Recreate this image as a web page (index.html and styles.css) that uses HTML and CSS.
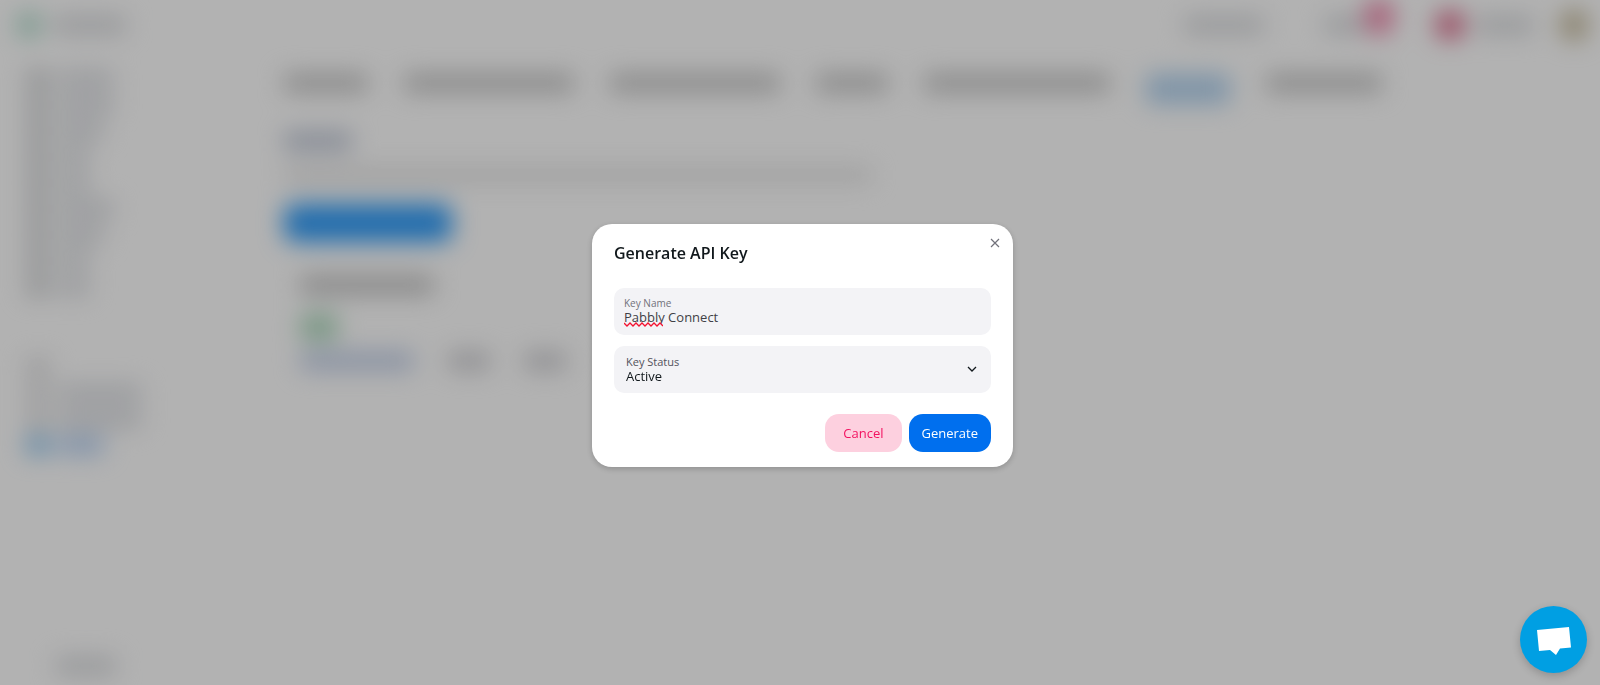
FILE: index.html
```html
<!DOCTYPE html>
<html lang="en">

<head>
    <meta charset="UTF-8">
    <meta name="viewport" content="width=device-width, initial-scale=1.0">
    <title>Generate API Key</title>
    <link rel="stylesheet" href="styles.css">
</head>

<body>

    <!-- Page behind the dialog -->
    <div class="app" aria-hidden="true">
        <header class="topbar">
            <span class="logo"></span>
            <span class="bar brand"></span>
            <div class="topbar-right">
                <span class="bar plan"></span>
                <span class="bar help"></span>
                <span class="badge"></span>
                <span class="dot"></span>
                <span class="bar user"></span>
                <span class="avatar"></span>
            </div>
        </header>

        <div class="columns">
            <nav class="sidebar">
                <div class="nav-row"><i></i><span class="bar long"></span></div>
                <div class="nav-row"><i></i><span class="bar long"></span></div>
                <div class="nav-row"><i></i><span class="bar mid"></span></div>
                <div class="nav-row"><i></i><span class="bar short"></span></div>
                <div class="nav-row"><i></i><span class="bar short"></span></div>
                <div class="nav-row"><i></i><span class="bar long"></span></div>
                <div class="nav-row"><i></i><span class="bar mid"></span></div>
                <div class="nav-row"><i></i><span class="bar short"></span></div>
                <div class="nav-row"><i></i><span class="bar short"></span></div>
                <div class="nav-group">
                    <div class="nav-row heading"><i></i></div>
                    <div class="nav-row"><i></i><span class="bar wide"></span></div>
                    <div class="nav-row"><i></i><span class="bar wide"></span></div>
                    <div class="nav-row current"><i></i><span class="bar mid"></span></div>
                </div>
                <span class="bar version"></span>
            </nav>

            <main class="content">
                <div class="tabs">
                    <span class="bar tab tab-s"></span>
                    <span class="bar tab tab-l"></span>
                    <span class="bar tab tab-l"></span>
                    <span class="bar tab tab-xs"></span>
                    <span class="bar tab tab-xl"></span>
                    <span class="bar tab tab-s active"></span>
                    <span class="bar tab tab-m"></span>
                </div>
                <div class="bar subtitle"></div>
                <div class="bar intro"></div>
                <div class="new-key"></div>
                <div class="key-card">
                    <div class="bar key-title"></div>
                    <div class="key-state"></div>
                    <div class="key-actions">
                        <span class="bar key-link"></span>
                        <span class="bar key-action"></span>
                        <span class="bar key-action"></span>
                    </div>
                </div>
            </main>
        </div>
    </div>

    <div class="overlay">
        <form class="modal" role="dialog" aria-modal="true" aria-labelledby="modalTitle">
            <button type="button" class="close" aria-label="Close">
                <svg width="10" height="10" viewBox="0 0 10 10">
                    <path d="M1 1l8 8M9 1l-8 8" fill="none" stroke="currentColor" stroke-width="1.2" />
                </svg>
            </button>
            <h1 id="modalTitle">Generate API Key</h1>

            <div class="field">
                <label for="keyName">Key Name</label>
                <input type="text" id="keyName" value="Pabbly Connect">
                <svg class="squiggle" width="39" height="5" viewBox="0 0 39 5">
                    <path d="M0 1l3 3 3-3 3 3 3-3 3 3 3-3 3 3 3-3 3 3 3-3 3 3 3-3 3 3" fill="none" stroke="#f31230"
                        stroke-width="1.3" />
                </svg>
            </div>

            <div class="field field-select">
                <label for="keyStatus">Key Status</label>
                <select id="keyStatus">
                    <option selected>Active</option>
                    <option>Inactive</option>
                </select>
                <svg class="chevron" width="10" height="6" viewBox="0 0 10 6">
                    <path d="M1 1l4 4 4-4" fill="none" stroke="currentColor" stroke-width="1.3" />
                </svg>
            </div>

            <div class="actions">
                <button type="button" class="btn cancel">Cancel</button>
                <button type="submit" class="btn generate">Generate</button>
            </div>
        </form>
    </div>

    <button type="button" class="chat" aria-label="Open chat">
        <svg width="67" height="67" viewBox="0 0 67 67">
            <path d="M17 24L49 21L51 41.500L40 42.500L36 49L30 44L19 45Z" fill="#fff" />
        </svg>
    </button>

</body>

</html>
```
FILE: styles.css
```css
* {
    box-sizing: border-box;
}

body {
    margin: 0;
    font-family: "Open Sans", "Noto Sans", sans-serif;
    background-color: #fff;
    color: #11181c;
}

button,
input,
select {
    font-family: inherit;
    border: none;
    padding: 0;
    margin: 0;
}

/* page behind the dialog */
.app {
    height: 100vh;
    display: flex;
    flex-direction: column;
    filter: blur(12px);
}

.bar {
    display: block;
    height: 18px;
    border-radius: 4px;
    background-color: #d8dadd;
}

.topbar {
    display: flex;
    align-items: center;
    height: 50px;
    padding: 0 12px 0 16px;
}

.logo {
    width: 26px;
    height: 26px;
    margin-right: 12px;
    border-radius: 50%;
    background-color: #b0dccc;
}

.brand {
    width: 72px;
}

.topbar-right {
    display: flex;
    align-items: center;
    margin-left: auto;
}

.plan {
    width: 80px;
    margin-right: 60px;
}

.help {
    width: 40px;
}

.badge {
    width: 30px;
    height: 36px;
    margin-right: 42px;
    align-self: flex-start;
    border-radius: 50%;
    background-color: #f088ac;
}

.topbar-right .badge {
    margin-top: -10px;
}

.dot {
    width: 28px;
    height: 28px;
    margin-right: 12px;
    border-radius: 50%;
    background-color: #d85c80;
}

.user {
    width: 58px;
    margin-right: 26px;
}

.avatar {
    width: 28px;
    height: 32px;
    border-radius: 50%;
    background-color: #c4b898;
}

.columns {
    display: flex;
    flex: 1;
}

.sidebar {
    display: flex;
    flex-direction: column;
    gap: 8px;
    width: 284px;
    padding: 20px 26px 10px;
}

.nav-row {
    display: flex;
    align-items: center;
    gap: 8px;
}

.nav-row i {
    width: 24px;
    height: 18px;
    border-radius: 4px;
    background-color: #ccced0;
}

.nav-row .bar {
    background-color: #dcdee2;
}

.long {
    width: 56px;
}

.mid {
    width: 46px;
}

.short {
    width: 32px;
}

.wide {
    width: 84px;
}

.nav-group {
    display: flex;
    flex-direction: column;
    gap: 8px;
    margin-top: 54px;
}

.nav-group i {
    background-color: #dcdcde;
}

.nav-group .current i {
    background-color: #84c0ee;
}

.nav-group .current .bar {
    background-color: #b4d0f4;
}

.version {
    width: 60px;
    margin: auto 0 0 30px;
}

.content {
    flex: 1;
    padding: 24px 0 0;
}

.tabs {
    display: flex;
    gap: 36px;
}

.tab {
    background-color: #c4c4c4;
}

.tab-xs {
    width: 72px;
}

.tab-s {
    width: 84px;
}

.tab-m {
    width: 116px;
}

.tab-l {
    width: 170px;
}

.tab-xl {
    width: 186px;
}

.active {
    height: 30px;
    background-color: #b4d4f0;
}

.subtitle {
    width: 68px;
    margin-top: 28px;
    background-color: #bcc4d4;
}

.intro {
    width: 588px;
    height: 14px;
    margin-top: 18px;
    background-color: #e2e2e2;
}

.new-key {
    width: 168px;
    height: 38px;
    margin-top: 22px;
    border-radius: 10px;
    background-color: #309cf8;
}

.key-card {
    padding: 34px 16px;
}

.key-title {
    width: 134px;
    background-color: #c0c0c0;
}

.key-state {
    width: 38px;
    height: 26px;
    margin-top: 20px;
    border-radius: 8px;
    background-color: #acd8bc;
}

.key-actions {
    display: flex;
    gap: 34px;
    margin-top: 12px;
}

.key-link {
    width: 114px;
    background-color: #c0cee8;
}

.key-action {
    width: 42px;
    background-color: #ccccd0;
}

/* dialog */
.overlay {
    position: fixed;
    inset: 0;
    display: flex;
    align-items: center;
    justify-content: center;
    padding: 6px 0 0 5px;
    background-color: rgba(0, 0, 0, 0.3);
}

.modal {
    position: relative;
    width: 421px;
    max-width: 100%;
    padding: 16px 22px 15px;
    border-radius: 20px;
    background-color: #fff;
    box-shadow: 0 2px 6px rgba(0, 0, 0, 0.2);
}

.modal h1 {
    margin: 0 0 22px;
    font-size: 16px;
    font-weight: 600;
    line-height: 26px;
}

.close {
    position: absolute;
    top: 14px;
    right: 13px;
    display: flex;
    padding: 0;
    background: none;
    color: #71717a;
    cursor: pointer;
}

.field {
    position: relative;
    display: flex;
    flex-direction: column;
    height: 47px;
    margin-bottom: 11px;
    padding: 8px 10px;
    border-radius: 10px;
    background-color: #f3f3f6;
}

.field label {
    font-size: 10px;
    line-height: 14px;
    color: #71717a;
}

.field input,
.field select {
    width: 100%;
    height: 14px;
    font-size: 13px;
    line-height: 14px;
    background: none;
    color: #3f3f46;
    outline: none;
    appearance: none;
}

.squiggle {
    position: absolute;
    top: 34px;
    left: 10px;
}

.field-select {
    padding: 9px 12px;
}

.field-select label {
    font-size: 11px;
    color: #52525b;
}

.field select {
    color: #11181c;
}

.chevron {
    position: absolute;
    top: 20px;
    right: 14px;
    pointer-events: none;
}

.actions {
    display: flex;
    justify-content: flex-end;
    gap: 7px;
    margin-top: 21px;
}

.btn {
    height: 38px;
    border-radius: 14px;
    font-size: 13px;
    cursor: pointer;
}

.cancel {
    padding: 0 18px;
    background-color: #fdd0df;
    color: #f31260;
}

.generate {
    padding: 0 13px;
    background-color: #006fee;
    color: #fff;
    font-weight: 500;
}

.chat {
    position: fixed;
    right: 13px;
    bottom: 12px;
    display: flex;
    border-radius: 50%;
    background-color: #009fe3;
    box-shadow: 0 3px 8px rgba(0, 0, 0, 0.2);
    cursor: pointer;
}
```
